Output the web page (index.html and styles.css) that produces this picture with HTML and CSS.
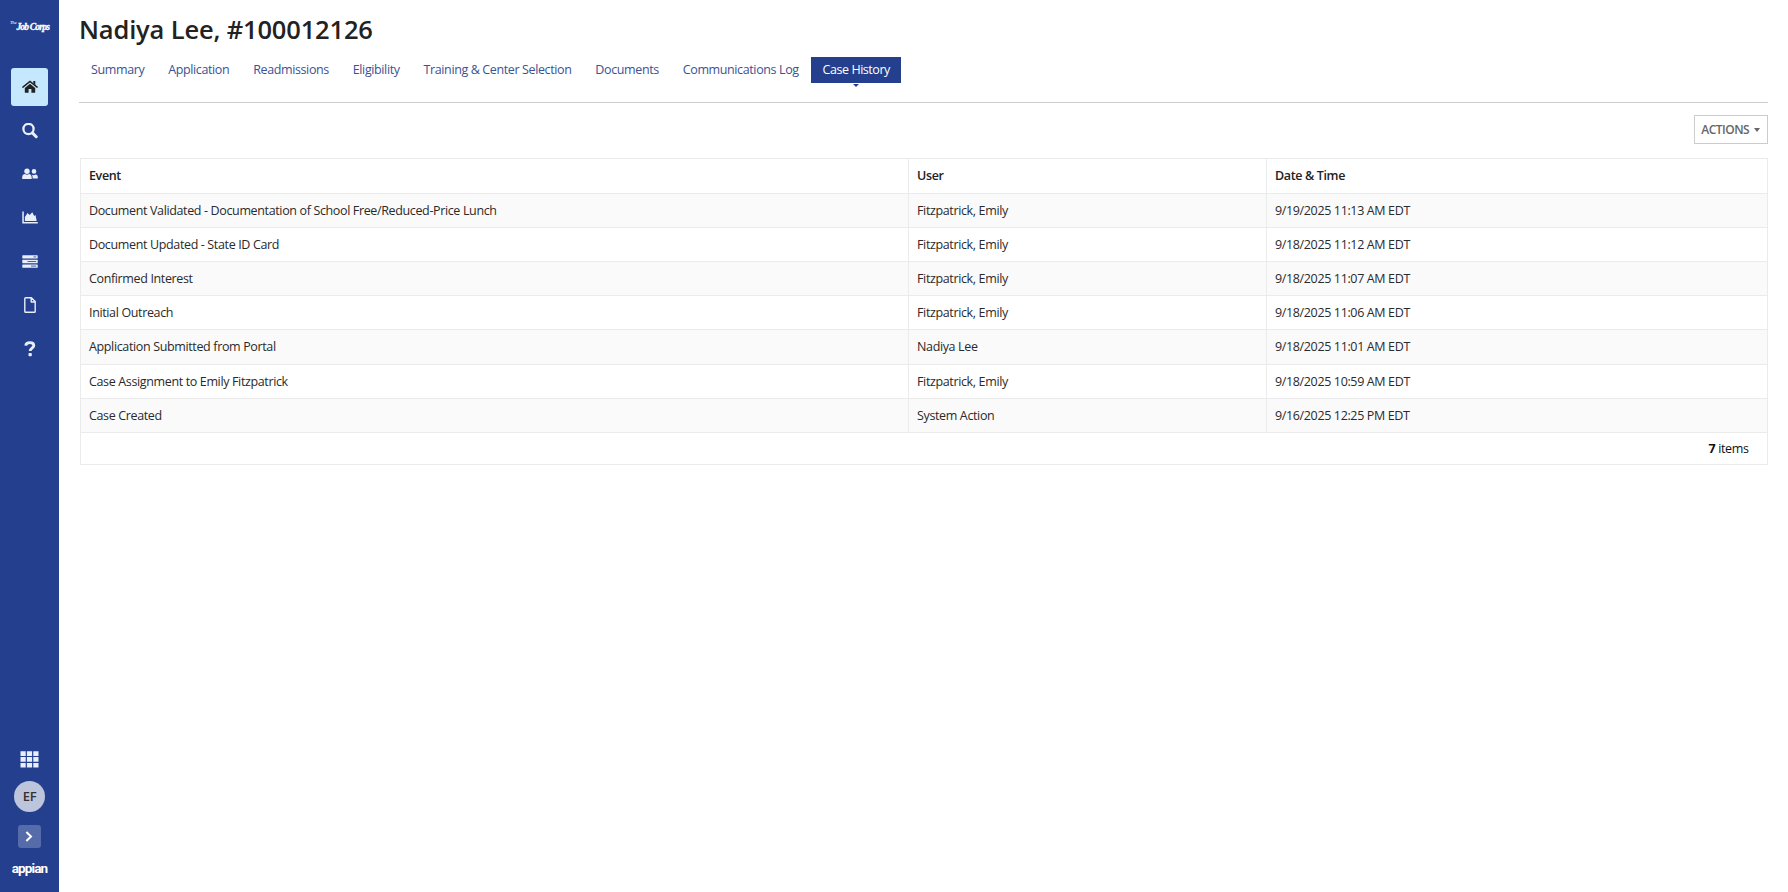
FILE: index.html
```html
<!DOCTYPE html>
<html lang="en">
<head>
<meta charset="utf-8">
<title>Nadiya Lee, #100012126</title>
<link rel="stylesheet" href="styles.css">
</head>
<body>
<div class="app">
  <aside class="sidebar">
    <div class="brand"><span class="brand-the">The</span><span class="brand-name">Job Corps</span></div>
    <nav class="nav">
      <a class="nav-item active"><svg width="16" height="14" viewBox="0 0 16 14"><path d="M8 3.8 13.2 8v4.2q0 .6-.6.6H9.4V9H6.6v3.8H3.4q-.6 0-.6-.6V8z"/><path d="M.9 7.1 8 1.4l7.1 5.7" fill="none" stroke="currentColor" stroke-width="1.5" stroke-linecap="round"/><path d="M11.3 1h2v4l-2-1.7z"/></svg></a>
      <a class="nav-item"><svg width="16" height="16" viewBox="0 0 16 16" fill="none" stroke="currentColor"><circle cx="6.5" cy="6" r="5.1" stroke-width="2.3"/><path d="M10.4 9.900 14.200 13.700" stroke-width="3" stroke-linecap="round"/></svg></a>
      <a class="nav-item"><svg width="16" height="12" viewBox="0 0 16 12"><circle cx="5" cy="3.2" r="2.7"/><path d="M.2 11V9.3C.2 7.2 1.6 6.1 3 6.1q2 1.2 4 0c1.5 0 2.7 1.3 2.7 3.2V11z"/><circle cx="12" cy="3.4" r="2.3"/><path d="M9.5 6.5q2 1.4 4-.1c1.500 0 2.300 1.200 2.300 2.700v1.500h-5.200c.1-1.800-.1-3-1.100-4.100z"/></svg></a>
      <a class="nav-item"><svg width="16" height="13" viewBox="0 0 16 13"><path d="M.3.5h1.500v10.500H15.800v1.500H.3z"/><path d="M2.900 10V6L5.600 2l2 2L10.300 1.300l1.900 3.600 1.300-.9L14.700 10z"/></svg></a>
      <a class="nav-item"><svg width="16" height="13" viewBox="0 0 16 13"><rect x=".3" y=".2" width="15.4" height="3.4" rx=".5"/><rect x=".3" y="4.8" width="15.4" height="3.4" rx=".5"/><rect x=".3" y="9.4" width="15.4" height="3.4" rx=".5"/><path d="M11.500 1.900h2.700M5.500 6.500h8.700M9 11.100h5.200" stroke="#233f8d" stroke-width=".8"/></svg></a>
      <a class="nav-item"><svg width="12" height="16" viewBox="0 0 12 16" fill="none" stroke="currentColor" stroke-width="1.4" stroke-linejoin="round"><path d="M1.700.8H7.400L11.200 4.600v9.800q0 .8-.8.8H1.700q-.9 0-.9-.8V1.600q0-.8.9-.8zM7.200 1v4h3.900"/></svg></a>
      <a class="nav-item"><svg width="12" height="16" viewBox="0 0 12 16"><path d="M1.700 4.600C2 2.500 3.400 1.600 5.900 1.600s3.900 1.200 3.900 3c0 2.600-3.700 2.500-3.700 5.400" fill="none" stroke="currentColor" stroke-width="2.8"/><rect x="4.500" y="12" width="3.300" height="3.300" rx=".8"/></svg></a>
    </nav>
    <div class="sidebar-foot">
      <svg class="grid-icon" width="19" height="17" viewBox="0 0 19 17"><path d="M.5.3h5.200v4.600H.5zM6.900.3h5.200v4.600H6.900zM13.300.3h5.200v4.600h-5.200zM.5 6.100h5.200v4.600H.5zM6.900 6.100h5.200v4.600H6.900zM13.300 6.100h5.200v4.600h-5.200zM.5 11.900h5.200v4.700H.5zM6.900 11.900h5.200v4.700H6.900zM13.300 11.900h5.200v4.700h-5.200z"/></svg>
      <div class="avatar">EF</div>
      <button class="expand"><svg width="8" height="11" viewBox="0 0 8 11" fill="none" stroke="#fff" stroke-width="2"><path d="M1.400 1 6 5.500 1.400 10"/></svg></button>
      <div class="appian">appian</div>
    </div>
  </aside>
  <main class="main">
    <h1 class="title">Nadiya Lee, #100012126</h1>
    <nav class="tabs">
      <a class="tab">Summary</a>
      <a class="tab">Application</a>
      <a class="tab">Readmissions</a>
      <a class="tab">Eligibility</a>
      <a class="tab">Training &amp; Center Selection</a>
      <a class="tab">Documents</a>
      <a class="tab">Communications Log</a>
      <a class="tab selected">Case History</a>
    </nav>
    <div class="toolbar"><button class="actions">ACTIONS<span class="caret"></span></button></div>
    <div class="grid">
      <div class="row head"><div class="cell">Event</div><div class="cell">User</div><div class="cell">Date &amp; Time</div></div>
      <div class="row odd"><div class="cell">Document Validated - Documentation of School Free/Reduced-Price Lunch</div><div class="cell">Fitzpatrick, Emily</div><div class="cell">9/19/2025 11:13 AM EDT</div></div>
      <div class="row"><div class="cell">Document Updated - State ID Card</div><div class="cell">Fitzpatrick, Emily</div><div class="cell">9/18/2025 11:12 AM EDT</div></div>
      <div class="row odd"><div class="cell">Confirmed Interest</div><div class="cell">Fitzpatrick, Emily</div><div class="cell">9/18/2025 11:07 AM EDT</div></div>
      <div class="row"><div class="cell">Initial Outreach</div><div class="cell">Fitzpatrick, Emily</div><div class="cell">9/18/2025 11:06 AM EDT</div></div>
      <div class="row odd"><div class="cell">Application Submitted from Portal</div><div class="cell">Nadiya Lee</div><div class="cell">9/18/2025 11:01 AM EDT</div></div>
      <div class="row"><div class="cell">Case Assignment to Emily Fitzpatrick</div><div class="cell">Fitzpatrick, Emily</div><div class="cell">9/18/2025 10:59 AM EDT</div></div>
      <div class="row odd"><div class="cell">Case Created</div><div class="cell">System Action</div><div class="cell">9/16/2025 12:25 PM EDT</div></div>
      <div class="footer"><b>7</b>&nbsp;items</div>
    </div>
  </main>
</div>
</body>
</html>
```
FILE: styles.css
```css
* { box-sizing: border-box; }
body { margin: 0; background: #fff; color: #2a2a2a; font-family: "Open Sans", "Noto Sans", sans-serif; font-size: 12.5px; letter-spacing: -0.36px; }
.app { display: flex; height: 892px; overflow: hidden; }

.sidebar { width: 59px; flex: none; background: #233f8d; color: #e9eefb; display: flex; flex-direction: column; align-items: center; }
.brand { height: 68px; padding-top: 19px; display: flex; align-items: flex-start; justify-content: center; color: #fff; font-family: "Liberation Serif", serif; font-style: italic; white-space: nowrap; }
.brand-the { font-size: 5px; line-height: 7px; }
.brand-name { font-size: 9.5px; line-height: 16px; font-weight: 700; letter-spacing: -0.8px; -webkit-text-stroke: 0.3px #fff; }
.nav { display: flex; flex-direction: column; gap: 5.6px; }
.nav-item { width: 37px; height: 38px; display: flex; align-items: center; justify-content: center; border-radius: 3px; }
.nav-item.active { background: #c5e8ff; color: #222; }
.nav svg, .grid-icon { fill: currentColor; }
.nav svg[fill="none"] { fill: none; }
.sidebar-foot { margin-top: auto; display: flex; flex-direction: column; align-items: center; padding-bottom: 11px; }
.avatar { width: 31px; height: 31px; margin-top: 13px; border-radius: 50%; background: #bdc5dd; color: #333; font-weight: 600; font-size: 13px; line-height: 30px; text-align: center; }
.expand { width: 23px; height: 23px; margin-top: 13px; padding: 0; border: 0; border-radius: 3px; background: #556baa; display: flex; align-items: center; justify-content: center; }
.appian { margin-top: 10px; height: 23px; line-height: 21px; color: #fff; font-family: "Roboto", sans-serif; font-weight: 700; font-size: 13.5px; letter-spacing: -0.9px; }

.main { flex: 1; min-width: 0; padding: 0 20.5px 0 20px; }
.title { margin: 0; padding-top: 11px; height: 57px; color: #222; font-size: 25.5px; line-height: 36px; font-weight: 600; letter-spacing: -0.16px; white-space: nowrap; }
.tabs { display: flex; height: 46px; align-items: flex-start; border-bottom: 1px solid #ccc; white-space: nowrap; }
.tab { height: 26px; line-height: 25px; padding: 0 11.9px 0 12px; color: #3a5293; letter-spacing: -0.38px; }
.tab.selected { padding: 0 11px 0 12px; background: #233f8d; color: #fff; letter-spacing: -0.45px; position: relative; }
.tab.selected::after { content: ""; position: absolute; left: 50%; top: 27px; margin-left: -3px; border: 3px solid transparent; border-top-color: #233f8d; border-bottom: 0; }
.toolbar { display: flex; justify-content: flex-end; padding-top: 12px; height: 55px; }
.actions { width: 73.5px; height: 29px; padding: 0; display: flex; align-items: center; justify-content: center; gap: 5px; border: 1px solid #ccc; background: #fff; color: #666; font: 600 12px "Open Sans", sans-serif; letter-spacing: -0.5px; }
.caret { border: 3.5px solid transparent; border-top: 4px solid #666; border-bottom: 0; }

.grid { margin-left: 1px; border: 1px solid #ebebeb; }
.row { display: grid; grid-template-columns: 828px 358px 1fr; height: 34.15px; line-height: 33px; border-bottom: 1px solid #ebebeb; }
.row.head { height: 34.8px; line-height: 34px; font-weight: 600; color: #222; }
.row.odd { background: #fafafa; }
.cell { padding-left: 8px; border-right: 1px solid #ebebeb; white-space: nowrap; }
.cell:last-child { border-right: 0; }
.footer { height: 31px; line-height: 31px; padding-right: 18px; text-align: right; color: #111; }
```
